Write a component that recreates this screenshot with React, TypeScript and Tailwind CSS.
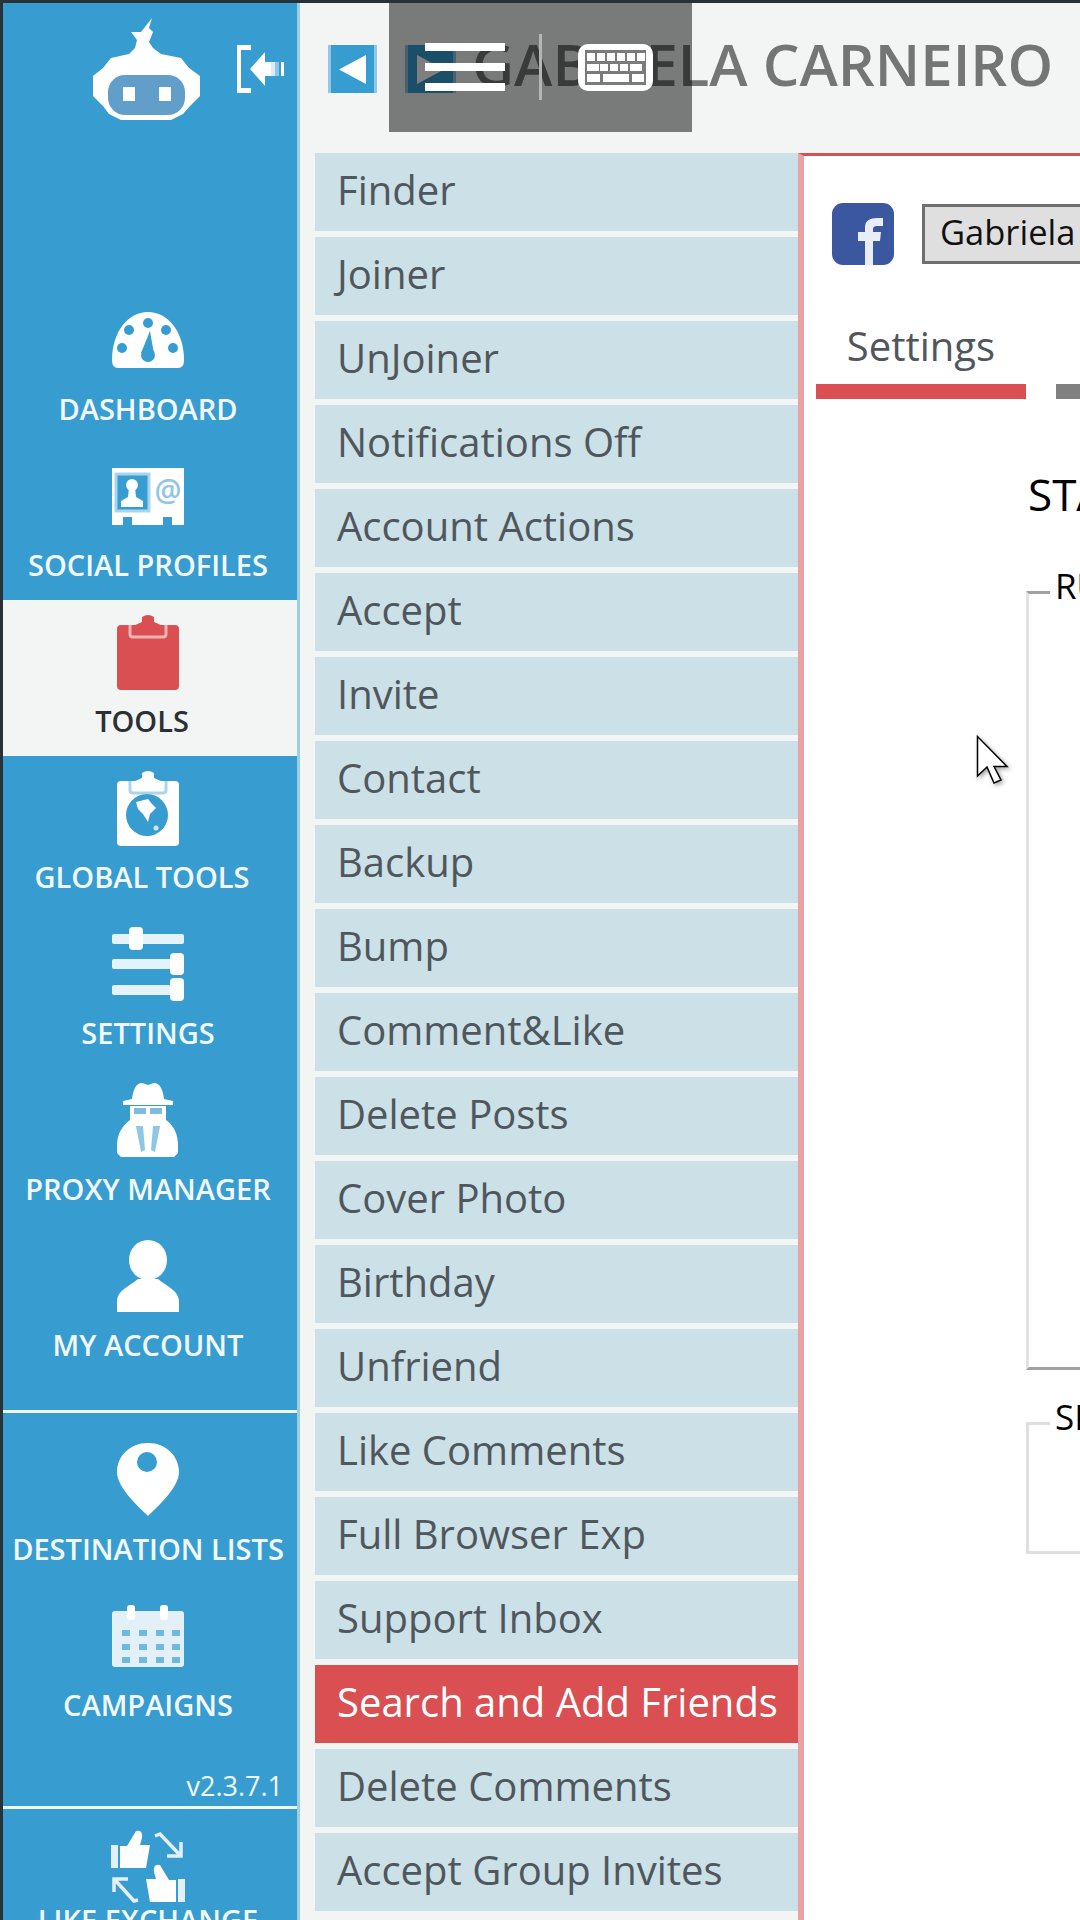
import type { ReactNode } from 'react';

const BLUE = '#379dd0';
const RED = '#d94f52';

const IconBox = ({ children, h = 106 }: { children: ReactNode; h?: number }) => (
  <svg width="80" height={h} viewBox={`0 0 80 ${h}`} className="block shrink-0">
    {children}
  </svg>
);

const RobotLogo = () => (
  <svg width="107" height="102" viewBox="0 0 107 102" className="shrink-0">
    <path
      d="M59 0 L56 10 L60 14 L56 24 L60 30 L68 36 L88 40 L96 50 L107 58 V78 L97 88 L90 96 L78 102 H28 L16 96 L10 88 L0 78 V58 L10 50 L18 40 L36 36 L42 30 L44 22 L38 14 L48 14 Z"
      fill="#fff"
    />
    <rect x="15" y="57" width="77" height="40" rx="17" fill="#619fca" />
    <rect x="30" y="69" width="12" height="14" fill="#fff" />
    <rect x="66" y="69" width="12" height="14" fill="#fff" />
  </svg>
);

const LogoutIcon = () => (
  <svg width="48" height="48" viewBox="0 0 48 48" className="shrink-0">
    <path d="M0 0 H14 V5 H4 V43 H14 V48 H0 Z" fill="#fff" />
    <path d="M13 24 L28 7 V17 H34 V31 H28 V41 Z" fill="#fff" />
    <rect x="34" y="17" width="4" height="14" fill="#d8edf7" />
    <rect x="38" y="17" width="4" height="14" fill="#8dc7e5" />
    <rect x="44" y="17" width="3" height="14" fill="#fff" />
  </svg>
);

const DashboardIcon = () => (
  <IconBox>
    <path d="M10 80 Q4 80 4 72 C4 44 20 24 40 24 C60 24 76 44 76 72 Q76 80 70 80 Z" fill="#fff" />
    <g fill={BLUE}>
      <circle cx="14" cy="60" r="5" />
      <circle cx="21" cy="42" r="5" />
      <circle cx="40" cy="35" r="5" />
      <circle cx="58" cy="42" r="5" />
      <circle cx="65" cy="60" r="5" />
      <circle cx="40" cy="67" r="7" />
      <path d="M42 43 L46 66 L33 65 Z" />
    </g>
  </IconBox>
);

const SocialIcon = () => (
  <IconBox>
    <path d="M4 24 H76 V81 H64 V73 H55 V81 H24 V73 H15 V81 H4 Z" fill="#fff" />
    <rect x="8" y="30" width="33" height="37" fill={BLUE} stroke="#a9d5ec" strokeWidth="3" />
    <circle cx="24" cy="41" r="6" fill="#fff" />
    <path d="M21 44 H27 L28 53 L35 57 V63 H13 V57 L20 53 Z" fill="#fff" />
    <text x="60" y="57" textAnchor="middle" fontSize="30" fontWeight="600" fill="#8fc7e4">
      @
    </text>
  </IconBox>
);

const Clipboard = ({ fill, line }: { fill: string; line: string }) => (
  <>
    <rect x="9" y="25" width="62" height="65" rx="4" fill={fill} />
    <path d="M22 25 V34 Q22 37 25 37 H55 Q58 37 58 34 V25" fill="none" stroke={line} strokeWidth="3" />
    <path d="M25 26 L34 22 V17 Q40 13 46 17 V22 L55 26 V33 H25 Z" fill={fill} />
  </>
);

const ToolsIcon = () => (
  <IconBox>
    <Clipboard fill={RED} line="#eeb3b5" />
  </IconBox>
);

const GlobalIcon = () => (
  <IconBox>
    <Clipboard fill="#fff" line="#a9d5ec" />
    <circle cx="39" cy="59" r="21" fill={BLUE} />
    <path d="M28 46 L40 43 L44 48 L48 52 L42 58 L40 66 L35 58 L30 53 Z" fill="#fff" />
    <circle cx="48" cy="72" r="2.5" fill="#cfe7f4" />
  </IconBox>
);

const SettingsIcon = () => (
  <IconBox>
    <g fill="#e4f2f9">
      <rect x="4" y="22" width="72" height="10" rx="2" />
      <rect x="4" y="47" width="60" height="10" rx="2" />
      <rect x="4" y="73" width="60" height="10" rx="2" />
    </g>
    <g fill="#fff">
      <rect x="21" y="15" width="14" height="23" rx="4" />
      <rect x="62" y="41" width="14" height="22" rx="4" />
      <rect x="62" y="66" width="14" height="23" rx="4" />
    </g>
  </IconBox>
);

const ProxyIcon = () => (
  <IconBox>
    <path d="M24 31 Q26 15 34 15 L40 17 L46 15 Q54 15 56 31 L65 33 V37 H15 V33 Z" fill="#fff" />
    <path d="M22 38 H58 V52 C66 58 70 66 70 78 V85 L66 89 H13 L9 85 V78 C9 66 14 58 22 52 Z" fill="#fff" />
    <rect x="26" y="40" width="12" height="6" fill="#7dbde0" />
    <rect x="42" y="40" width="12" height="6" fill="#7dbde0" />
    <path d="M28 58 L35 58 L37 82 L33 84 Z M45 58 L52 58 L47 84 L43 82 Z" fill="#8ec6e4" />
  </IconBox>
);

const AccountIcon = () => (
  <IconBox>
    <ellipse cx="40" cy="36" rx="19" ry="20" fill="#fff" />
    <path d="M9 88 V78 C9 66 22 62 30 55 H50 C58 62 71 66 71 78 V88 Z" fill="#fff" />
  </IconBox>
);

const PinIcon = () => (
  <IconBox>
    <path d="M40 15 C22 15 9 28 9 44 C9 60 32 80 40 88 C48 80 71 60 71 44 C71 28 58 15 40 15 Z" fill="#fff" />
    <circle cx="39" cy="34" r="10" fill={BLUE} />
  </IconBox>
);

const CalendarIcon = () => (
  <IconBox>
    <rect x="4" y="27" width="72" height="56" rx="3" fill="#e3f0f8" />
    <rect x="19" y="21" width="8" height="15" rx="3" fill="#fff" />
    <rect x="52" y="21" width="8" height="15" rx="3" fill="#fff" />
    <g fill="#6fb8de">
      {[46, 60, 73].map((y) =>
        [14, 31, 48, 64].map((x) => <rect key={`${x}-${y}`} x={x} y={y} width="8" height="6" />),
      )}
    </g>
  </IconBox>
);

const Thumb = () => (
  <>
    <rect x="3" y="36" width="7" height="23" fill="#e3f0f8" />
    <path d="M12 37 H19 L28 22 Q35 20 34 29 L32 36 H42 L38 59 H12 Z" fill="#fff" />
  </>
);

const LikeIcon = () => (
  <IconBox h={96}>
    <Thumb />
    <g transform="translate(80 34) scale(-1 1)">
      <Thumb />
    </g>
    <path d="M47 27 L52 25 L71 45 M73 33 V47 H59" fill="none" stroke="#e3f0f8" strokeWidth="3.5" />
    <path d="M30 91 L26 92 L7 71 M6 83 V70 H20" fill="none" stroke="#e3f0f8" strokeWidth="3.5" />
  </IconBox>
);

const NavItem = ({
  icon,
  label,
  active,
  shift,
  short,
}: {
  icon: ReactNode;
  label: string;
  active?: boolean;
  shift?: boolean;
  short?: boolean;
}) => (
  <div className={`flex flex-col items-center pr-[4px] ${short ? 'h-[111px]' : 'h-[156px]'} ${active ? 'bg-[#f3f5f5]' : ''}`}>
    {icon}
    <div
      className={`text-[29px] leading-[30px] font-semibold whitespace-nowrap ${active ? 'text-[#2b3036]' : 'text-[#f2f9fd]'} ${shift ? 'pr-[12px]' : ''}`}
    >
      {label}
    </div>
  </div>
);

const Sidebar = () => (
  <aside className="w-[297px] shrink-0 h-full bg-[#379dd0] border-r-[3px] border-[#9ccde6] overflow-hidden">
    <div className="h-[285px] flex items-start pl-[90px] pt-[15px]">
      <RobotLogo />
      <div className="ml-[37px] mt-[27px]">
        <LogoutIcon />
      </div>
    </div>
    <NavItem icon={<DashboardIcon />} label="DASHBOARD" />
    <NavItem icon={<SocialIcon />} label="SOCIAL PROFILES" />
    <NavItem icon={<ToolsIcon />} label="TOOLS" active shift />
    <NavItem icon={<GlobalIcon />} label="GLOBAL TOOLS" shift />
    <NavItem icon={<SettingsIcon />} label="SETTINGS" />
    <NavItem icon={<ProxyIcon />} label="PROXY MANAGER" />
    <NavItem icon={<AccountIcon />} label="MY ACCOUNT" />
    <div className="h-[3px] mt-[30px] mb-[15px] bg-[#eef7fb]" />
    <NavItem icon={<PinIcon />} label="DESTINATION LISTS" />
    <NavItem icon={<CalendarIcon />} label="CAMPAIGNS" />
    <div className="h-[66px] flex items-end justify-end pr-[14px] pb-[2px] text-[27px] leading-[36px] text-[#f2f9fd]">
      v2.3.7.1
    </div>
    <div className="h-[3px] bg-[#eef7fb]" />
    <NavItem icon={<LikeIcon />} label="LIKE EXCHANGE" short />
  </aside>
);

const tools = [
  'Finder',
  'Joiner',
  'UnJoiner',
  'Notifications Off',
  'Account Actions',
  'Accept',
  'Invite',
  'Contact',
  'Backup',
  'Bump',
  'Comment&Like',
  'Delete Posts',
  'Cover Photo',
  'Birthday',
  'Unfriend',
  'Like Comments',
  'Full Browser Exp',
  'Support Inbox',
  'Search and Add Friends',
  'Delete Comments',
  'Accept Group Invites',
];

const ToolMenu = () => (
  <div className="w-[498px] shrink-0 pl-[15px] flex flex-col gap-[6px]">
    {tools.map((tool) => (
      <div
        key={tool}
        className={`h-[78px] shrink-0 flex items-center pl-[22px] pb-[5px] text-[40px] whitespace-nowrap ${
          tool === 'Search and Add Friends' ? 'bg-[#d94f52] text-white' : 'bg-[#cbe0e7] text-[#50575c]'
        }`}
      >
        {tool}
      </div>
    ))}
  </div>
);

const FacebookIcon = () => (
  <svg width="62" height="62" viewBox="0 0 62 62" className="shrink-0">
    <rect width="62" height="62" rx="11" fill="#3a57a0" />
    <path
      d="M33 62 V38 H26 V29 H33 V24 C33 18 38 15 45 15 H51 V23 H46 C42 23 41 24 41 27 V29 H49 L48 38 H41 V62 Z"
      fill="#e9edf6"
    />
  </svg>
);

const Panel = () => (
  <section className="flex-1 min-w-0 bg-white border-l-[6px] border-l-[#e9a3a6] border-t-[3px] border-t-[#d94f52] overflow-hidden">
    <div className="flex items-center pl-[28px] pt-[47px]">
      <FacebookIcon />
      <div className="ml-[28px] w-[300px] h-[60px] shrink-0 bg-[#dfdfdf] border-[3px] border-[#6f6f6f] pl-[15px] pb-[4px] flex items-center text-[34.5px] text-[#111] whitespace-nowrap">
        Gabriela
      </div>
    </div>
    <div className="flex gap-[30px] pl-[12px] mt-[51px]">
      <div className="w-[210px] shrink-0 border-b-[15px] border-[#d94f52] h-[83px] text-center text-[40px] leading-[60px] text-[#50575c] whitespace-nowrap">
        Settings
      </div>
      <div className="w-[210px] shrink-0 border-b-[15px] border-[#808080] h-[83px]" />
    </div>
    <div className="ml-[224px] w-[400px] mt-[65px] text-[44px] leading-[60px] text-black whitespace-nowrap">STATUS</div>
    <fieldset className="block ml-[222px] w-[400px] h-[804px] mt-[42px] border-[3px] border-[#e2e2e2] border-t-[#a0a0a0] border-b-[#a0a0a0]">
      <legend className="ml-[21px] px-[5px] pb-[12px] text-[35px] leading-[40px] text-black">RUN</legend>
    </fieldset>
    <fieldset className="block ml-[222px] w-[400px] h-[157px] mt-[27px] border-[3px] border-[#dfdfdf]">
      <legend className="ml-[21px] px-[5px] pb-[12px] text-[35px] leading-[40px] text-black">SEARCH</legend>
    </fieldset>
  </section>
);

const KeyboardIcon = () => (
  <svg width="75" height="47" viewBox="0 0 75 47" className="shrink-0">
    <rect width="75" height="47" rx="10" fill="#fff" />
    <rect x="7" y="6" width="61" height="35" fill="#7b7b7b" />
    <g fill="#fff">
      {[9, 19, 29, 39, 49, 59].map((x) => (
        <rect key={x} x={x} y="9" width="8" height="8" />
      ))}
      {[9, 22, 32, 42, 52].map((x, i) => (
        <rect key={x} x={x} y="20" width={i === 0 || i === 4 ? 12 : 8} height="7" />
      ))}
      <rect x="9" y="30" width="13" height="8" />
      <rect x="25" y="30" width="26" height="8" />
      <rect x="54" y="30" width="12" height="8" />
    </g>
  </svg>
);

const Overlay = () => (
  <div className="absolute left-[386px] -top-[3px] w-[303px] h-[132px] bg-black/50 flex items-center pl-[36px] pt-[2px]">
    <div className="flex flex-col gap-[12px] w-[80px]">
      <div className="h-[8px] bg-white" />
      <div className="h-[8px] bg-white" />
      <div className="h-[8px] bg-white" />
    </div>
    <div className="ml-[34px] w-[3px] h-[66px] bg-[#b5b5b5]" />
    <div className="ml-[36px]">
      <KeyboardIcon />
    </div>
  </div>
);

const Cursor = () => (
  <svg
    width="38"
    height="54"
    viewBox="0 0 38 54"
    className="absolute left-[971px] top-[730px] drop-shadow-[2px_2px_2px_rgba(0,0,0,0.35)]"
  >
    <path d="M3.5 3.5 V43 L13 34 L20 50 L27 47 L20 33.5 H33 Z" fill="#fff" stroke="#000" strokeWidth="1.5" />
  </svg>
);

const App = () => (
  <div className="relative w-[1080px] h-[1920px] overflow-hidden border-t-[3px] border-l-[3px] border-[#263238] bg-[#f3f5f5] flex font-['Open_Sans',sans-serif]">
    <Sidebar />
    <main className="flex-1 min-w-0 flex flex-col">
      <header className="h-[150px] shrink-0 flex items-start pl-[28px] pt-[42px]">
        <div className="w-[49px] h-[48px] shrink-0 bg-[#379dd0] border-x-[3px] border-[#8fc7e4] flex items-center justify-center">
          <svg width="27" height="29" viewBox="0 0 27 29">
            <path d="M27 0 V29 L0 14.5 Z" fill="#fff" />
          </svg>
        </div>
        <div className="ml-[28px] w-[51px] h-[48px] shrink-0 bg-[#379dd0] border-x-[3px] border-[#8fc7e4] flex items-center justify-center">
          <svg width="27" height="29" viewBox="0 0 27 29">
            <path d="M0 0 V29 L27 14.5 Z" fill="#fff" />
          </svg>
        </div>
        <h1 className="ml-[16px] -mt-[5px] text-[58px] leading-[48px] font-semibold text-[#757575] whitespace-nowrap">
          GABRIELA CARNEIRO
        </h1>
      </header>
      <div className="flex-1 min-h-0 flex">
        <ToolMenu />
        <Panel />
      </div>
    </main>
    <Overlay />
    <Cursor />
  </div>
);

export default App;
